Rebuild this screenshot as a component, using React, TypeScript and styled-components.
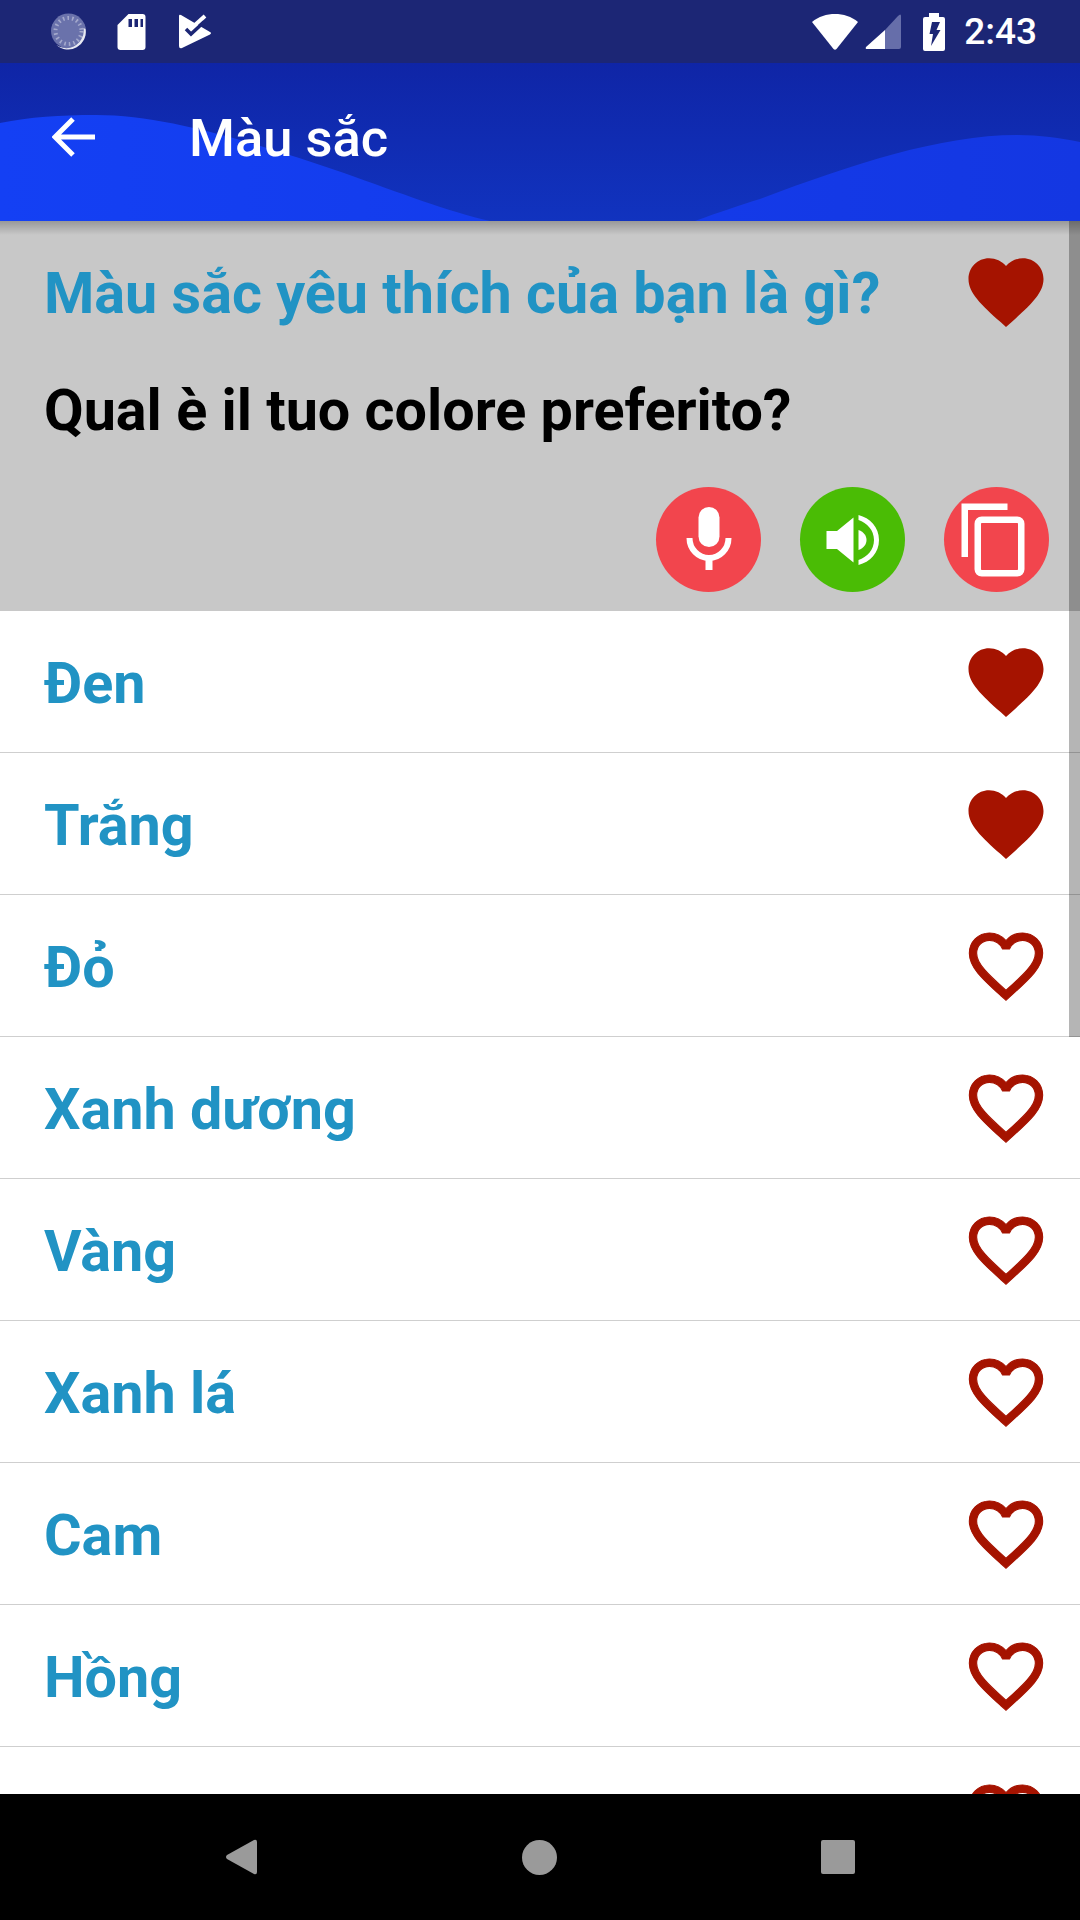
import styled, { createGlobalStyle } from "styled-components";

const words = [
  { label: "Đen", liked: true },
  { label: "Trắng", liked: true },
  { label: "Đỏ", liked: false },
  { label: "Xanh dương", liked: false },
  { label: "Vàng", liked: false },
  { label: "Xanh lá", liked: false },
  { label: "Cam", liked: false },
  { label: "Hồng", liked: false },
  { label: "", liked: false },
];

const GlobalStyle = createGlobalStyle`
  html, body {
    margin: 0;
    padding: 0;
    background: #000;
    font-family: Roboto, "Noto Sans", sans-serif;
  }
  * {
    box-sizing: border-box;
  }
`;

const Screen = styled.div`
  width: 1080px;
  height: 1920px;
  display: flex;
  flex-direction: column;
  overflow: hidden;
`;

const StatusBar = styled.div`
  height: 63px;
  flex: none;
  display: flex;
  align-items: center;
  padding: 0 43px 0 50px;
  background: #1c2675;
  color: #fff;
`;

const StatusLeft = styled.div`
  display: flex;
  align-items: center;
  flex: 1;
`;

const LoaderIcon = styled.svg`
  width: 37px;
  height: 38px;
`;

const SdIcon = styled.svg`
  margin-left: 29px;
  width: 31px;
  height: 38px;
`;

const TaskIcon = styled.svg`
  margin-left: 32px;
  width: 33px;
  height: 36px;
`;

const StatusRight = styled.div`
  display: flex;
  align-items: center;
`;

const SignalIcon = styled.svg`
  margin-left: 7px;
  width: 36px;
  height: 36px;
`;

const BatteryIcon = styled.svg`
  margin-left: 22px;
  width: 22px;
  height: 38px;
`;

const Time = styled.span`
  margin-left: 19px;
  font-size: 37px;
  font-weight: 500;
  line-height: 63px;
`;

const Toolbar = styled.div`
  position: relative;
  height: 158px;
  flex: none;
  display: flex;
  align-items: center;
  padding: 0 0 10px 52px;
  background: linear-gradient(180deg, #0f25a6 0%, #1133bf 100%);
  color: #fff;
`;

const Wave = styled.svg`
  position: absolute;
  left: 0;
  top: 0;
  width: 1080px;
  height: 158px;
`;

const BackIcon = styled.svg`
  position: relative;
  width: 44px;
  height: 42px;
  flex: none;
`;

const ToolbarTitle = styled.div`
  position: relative;
  margin: 2px 0 0 93px;
  font-size: 52.5px;
  font-weight: 500;
  line-height: 60px;
`;

const Content = styled.div`
  position: relative;
  flex: 1;
  min-height: 0;
  overflow: hidden;
  background: #fff;
`;

const ToolbarShadow = styled.div`
  position: absolute;
  left: 0;
  right: 0;
  top: 0;
  height: 14px;
  background: linear-gradient(180deg, rgba(0, 0, 0, 0.24), rgba(0, 0, 0, 0));
`;

const ScrollThumb = styled.div`
  position: absolute;
  right: 0;
  top: 0;
  width: 11px;
  height: 816px;
  background: rgba(0, 0, 0, 0.29);
`;

const Phrase = styled.div`
  height: 390px;
  padding: 0 31px 19px 44px;
  display: flex;
  flex-direction: column;
  background: #c8c8c8;
`;

const PhraseTop = styled.div`
  height: 142px;
  margin-right: -2px;
  display: flex;
  align-items: center;
  justify-content: space-between;
`;

const PhraseQuestion = styled.div`
  margin-top: 3px;
  font-size: 57.5px;
  font-weight: 700;
  color: #2193c4;
`;

const PhraseAnswer = styled.div`
  margin-top: 3px;
  font-size: 57.5px;
  font-weight: 700;
  line-height: 90px;
  color: #000;
`;

const Actions = styled.div`
  margin-top: auto;
  display: flex;
  justify-content: flex-end;
  gap: 39px;
`;

const RoundButton = styled.div<{ $color: string }>`
  width: 105px;
  height: 105px;
  border-radius: 50%;
  display: flex;
  align-items: center;
  justify-content: center;
  background: ${(p) => p.$color};
`;

const Row = styled.div`
  height: 142px;
  display: flex;
  align-items: center;
  justify-content: space-between;
  padding: 0 29px 0 44px;
  border-bottom: 1px solid #cfcfcf;
`;

const RowLabel = styled.div`
  margin-top: 4px;
  font-size: 57.5px;
  font-weight: 700;
  color: #2193c4;
`;

const HeartSlot = styled.div`
  width: 90px;
  height: 90px;
  display: flex;
  align-items: center;
  justify-content: center;
`;

const NavBar = styled.div`
  height: 126px;
  flex: none;
  display: flex;
  align-items: center;
  justify-content: space-between;
  padding: 0 225px 0 226px;
  background: #000;
`;

function Heart({ filled }: { filled: boolean }) {
  return (
    <HeartSlot>
      {filled ? (
        <svg width="90" height="90" viewBox="0 0 24 24" fill="#a51300">
          <path d="M12 21.35l-1.45-1.32C5.4 15.36 2 12.28 2 8.5 2 5.42 4.42 3 7.5 3c1.74 0 3.41.81 4.5 2.09C13.09 3.81 14.76 3 16.5 3 19.58 3 22 5.42 22 8.5c0 3.78-3.4 6.86-8.55 11.54L12 21.35z" />
        </svg>
      ) : (
        <svg width="88" height="88" viewBox="0 0 24 24" fill="#a51300" stroke="#a51300" strokeWidth="0.3">
          <path d="M16.5 3c-1.74 0-3.41.81-4.5 2.09C10.91 3.81 9.24 3 7.5 3 4.42 3 2 5.42 2 8.5c0 3.78 3.4 6.86 8.55 11.54L12 21.35l1.45-1.32C18.6 15.36 22 12.28 22 8.5 22 5.42 19.58 3 16.5 3zm-4.4 15.55l-.1.1-.1-.1C7.14 14.24 4 11.39 4 8.5 4 6.5 5.5 5 7.5 5c1.54 0 3.04.99 3.57 2.36h1.87C13.46 5.99 14.96 5 16.5 5c2 0 3.5 1.5 3.5 3.5 0 2.89-3.14 5.74-7.9 10.05z" />
        </svg>
      )}
    </HeartSlot>
  );
}

function App() {
  return (
    <Screen>
      <GlobalStyle />
      <StatusBar>
        <StatusLeft>
          <LoaderIcon viewBox="0 0 36 38">
            <circle cx="18" cy="18" r="17.5" fill="#6a72ab" />
            <circle cx="18" cy="18" r="13" fill="none" stroke="#a4a9cc" strokeWidth="4" strokeDasharray="1.6 3" />
            <path d="M35 16 A17.5 17.5 0 0 1 6 32 A17 17 0 0 0 31 26 A16 16 0 0 0 33 15 Z" fill="#e8e9f2" />
          </LoaderIcon>
          <SdIcon viewBox="0 0 30 38">
            <path d="M12 1 H26 a3 3 0 0 1 3 3 V34 a3 3 0 0 1 -3 3 H4 a3 3 0 0 1 -3 -3 V12 Z" fill="#fff" />
            <path d="M12 6h3.500v8H12zM18 6h3.500v8H18zM24 6h2.500v8H24z" fill="#1c2675" />
          </SdIcon>
          <TaskIcon viewBox="0 0 33 36">
            <path d="M2 1 L31 18 Q33 19 31 20.500 L3 34 Q0 35 0 32 V2 Q0 0 2 1 Z" fill="#fff" />
            <path d="M16 11 L26 2" fill="none" stroke="#fff" strokeWidth="4" />
            <path d="M7 15 L12 20 L25 8" fill="none" stroke="#1c2675" strokeWidth="3.500" />
          </TaskIcon>
        </StatusLeft>
        <StatusRight>
          <svg width="46" height="36" viewBox="0 0 46 36">
            <path d="M0 8 C13 -2.600 33 -2.600 46 8 L24.500 35 Q23 36.500 21.500 35 Z" fill="#fff" />
          </svg>
          <SignalIcon viewBox="0 0 36 36">
            <path d="M36 2 V33 a2 2 0 0 1 -2 2 H20 V16 L33 2 Q36 -1 36 2 Z" fill="#666eaa" />
            <path d="M20 16 V35 H2 Q0 35 1 33 Z" fill="#fff" />
          </SignalIcon>
          <BatteryIcon viewBox="0 0 22 38">
            <path d="M6 0 H16 V4 H20 a2 2 0 0 1 2 2 V36 a2 2 0 0 1 -2 2 H2 a2 2 0 0 1 -2 -2 V6 a2 2 0 0 1 2 -2 H6 Z" fill="#fff" />
            <path d="M9 9 H17 L13.500 17 H17.500 L8 33 L10 21 H6.500 Z" fill="#1c2675" />
          </BatteryIcon>
          <Time>2:43</Time>
        </StatusRight>
      </StatusBar>

      <Toolbar>
        <Wave viewBox="0 0 1080 158">
          <defs>
            <linearGradient id="waveFill" x1="0" y1="0" x2="1" y2="0">
              <stop offset="0" stopColor="#1440f4" />
              <stop offset="1" stopColor="#1437e2" />
            </linearGradient>
          </defs>
          <path
            d="M0 60 C30 54 60 52 96 52 C170 52 260 82 344 110 C400 130 450 149 490 158 L695 158 C720 149 740 142 760 136 C850 102 940 72 1017 72 C1040 72 1060 75 1080 79 L1080 158 L0 158 Z"
            fill="url(#waveFill)"
          />
        </Wave>
        <BackIcon viewBox="0 0 44 42">
          <path d="M43 21 H4 M21 3 L3 21 L21 39" fill="none" stroke="#fff" strokeWidth="5" />
        </BackIcon>
        <ToolbarTitle>Màu sắc</ToolbarTitle>
      </Toolbar>

      <Content>
        <Phrase>
          <PhraseTop>
            <PhraseQuestion>Màu sắc yêu thích của bạn là gì?</PhraseQuestion>
            <Heart filled />
          </PhraseTop>
          <PhraseAnswer>Qual è il tuo colore preferito?</PhraseAnswer>
          <Actions>
            <RoundButton $color="#f2454d">
              <svg width="60" height="66" viewBox="0 0 60 66" fill="#fff">
                <rect x="19.500" y="0" width="21" height="40" rx="10.500" />
                <path d="M10.500 31 a19.500 20 0 0 0 39 0" fill="none" stroke="#fff" strokeWidth="6" />
                <rect x="26.500" y="50" width="7" height="13" />
              </svg>
            </RoundButton>
            <RoundButton $color="#4abc05">
              <svg width="54" height="50" viewBox="0 0 54 50" fill="#fff">
                <path d="M0.500 16 H11 L27.500 2.500 V47.500 L11 34 H0.500 Z" />
                <path d="M32.500 15 C38 17 40.500 21 40.500 25 C40.500 29 38 33 32.500 35 Z" />
                <path d="M32.500 0 C44 3 53 12 53 25 C53 38 44 47 32.500 50 V45 C41 42 48 35 48 25 C48 15 41 8 32.500 5 Z" />
              </svg>
            </RoundButton>
            <RoundButton $color="#f2454d">
              <svg width="72" height="74" viewBox="0 0 72 74" fill="none" stroke="#fff" strokeWidth="6.500">
                <path d="M3.750 54 V3.750 H46.500" />
                <rect x="16.750" y="16.750" width="43.500" height="53.500" rx="4" />
              </svg>
            </RoundButton>
          </Actions>
        </Phrase>

        {words.map((w, i) => (
          <Row key={i}>
            <RowLabel>{w.label}</RowLabel>
            <Heart filled={w.liked} />
          </Row>
        ))}

        <ToolbarShadow />
        <ScrollThumb />
      </Content>

      <NavBar>
        <svg width="32" height="36" viewBox="0 0 32 36">
          <path d="M28 1 Q31 0 31 3 V33 Q31 36 28 35 L1 20 Q-1 18 1 16 Z" fill="#9a9a9a" />
        </svg>
        <svg width="35" height="35" viewBox="0 0 35 35">
          <circle cx="17.500" cy="17.500" r="17.500" fill="#9a9a9a" />
        </svg>
        <svg width="34" height="34" viewBox="0 0 34 34">
          <rect width="34" height="34" rx="2" fill="#9a9a9a" />
        </svg>
      </NavBar>
    </Screen>
  );
}

export default App;
